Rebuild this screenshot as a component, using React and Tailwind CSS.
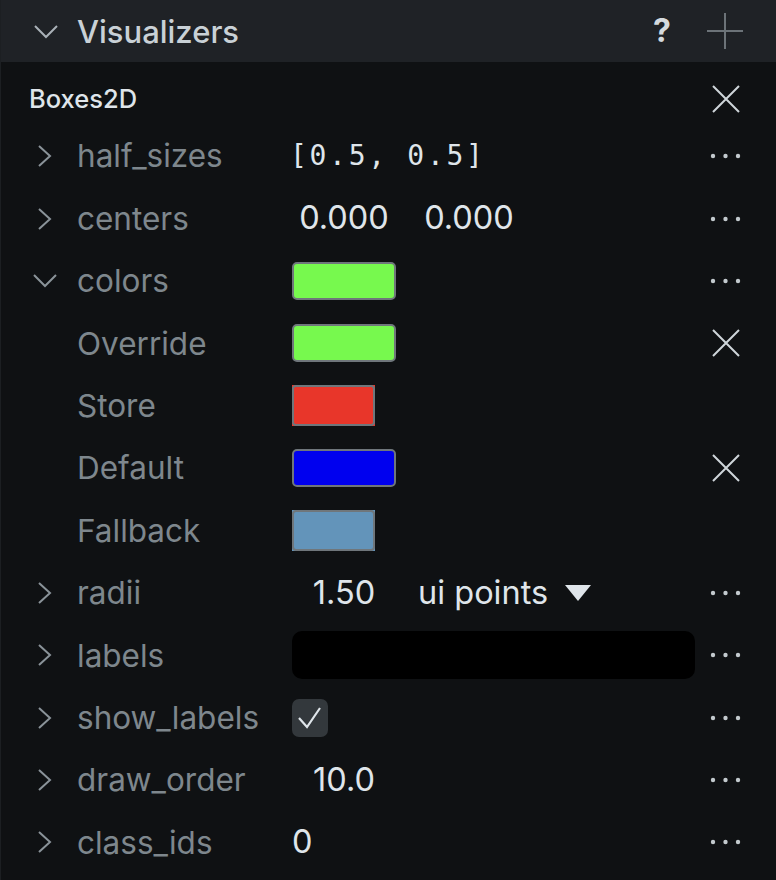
import React from 'react';

const ChevronRight = () => (
  <svg width="22" height="24" viewBox="0 0 22 24" className="text-[#8a9399]">
    <path d="M5 2 L16 12 L5 22" fill="none" stroke="currentColor" strokeWidth="2" />
  </svg>
);

const ChevronDown = ({ className = 'text-[#8a9399]' }) => (
  <svg width="24" height="16" viewBox="0 0 24 16" className={className}>
    <path d="M1 2 L12 13 L23 2" fill="none" stroke="currentColor" strokeWidth="2" />
  </svg>
);

const Cross = () => (
  <svg width="28" height="28" viewBox="0 0 28 28" className="text-[#cfd6da]">
    <path d="M1 1 L27 27 M27 1 L1 27" fill="none" stroke="currentColor" strokeWidth="2" />
  </svg>
);

const Dots = () => (
  <svg width="32" height="6" viewBox="0 0 32 6" className="text-[#c3cace]">
    <circle cx="3" cy="3" r="2.2" fill="currentColor" />
    <circle cx="15.5" cy="3" r="2.2" fill="currentColor" />
    <circle cx="28" cy="3" r="2.2" fill="currentColor" />
  </svg>
);

const Swatch = ({ color }) => (
  <div className="w-[104px] h-[38px] border-2 border-[#6f767b] rounded-[5px]" style={{ backgroundColor: color }} />
);

// square swatch: colour bleeds past the rounded gray frame
const FlatSwatch = ({ color }) => (
  <div className="w-[83px] h-[41px]" style={{ backgroundColor: color }}>
    <div className="w-full h-full border-2 border-[#6f767b] rounded-[4px]" />
  </div>
);

const Row = ({ chevron = 'right', label, children, action }) => (
  <div className="flex items-center h-[62.4px]">
    <div className="w-[76px] flex justify-center pl-[16px] pr-[4px]">
      {chevron === 'right' && <ChevronRight />}
      {chevron === 'down' && <ChevronDown />}
    </div>
    <div className="w-[215px] text-[31.5px] text-[#7e878d] leading-none">{label}</div>
    <div className="flex-1 flex items-center">{children}</div>
    <div className="w-[76px] flex justify-center pr-[24px]">
      {action === 'dots' && <Dots />}
      {action === 'x' && <Cross />}
    </div>
  </div>
);

const DragValue = ({ children }) => (
  <div className="w-[104px] text-center text-[32.5px] text-[#dfe5ea] leading-none">{children}</div>
);

export default function App() {
  return (
    <div className="w-[776px] h-[880px] bg-[#0f1113] border-l border-[#1c1f22] font-['Inter',sans-serif] overflow-hidden">
      <div className="h-[62px] bg-[#1f2226] flex items-center">
        <div className="w-[76px] flex justify-end pr-[19px] pt-[2px]">
          <ChevronDown className="text-[#a9b1b7]" />
        </div>
        <div className="flex-1 text-[31px] font-medium text-[#c9d1d6] leading-none">Visualizers</div>
        <div className="text-[32px] font-bold text-[#d4dade] leading-none mr-[36px]">?</div>
        <svg width="36" height="36" viewBox="0 0 36 36" className="mr-[33px] text-[#6c7378]">
          <path d="M18 0 V36 M0 18 H36" stroke="currentColor" strokeWidth="2" />
        </svg>
      </div>

      <div className="h-[63px] flex items-center pt-[11px]">
        <div className="flex-1 pl-[28px] text-[25.5px] font-medium text-[#dfe5ea] leading-none">Boxes2D</div>
        <div className="w-[76px] flex justify-center pr-[24px]">
          <Cross />
        </div>
      </div>

      <Row label="half_sizes" action="dots">
        <span className="-ml-[2px] font-['DejaVu_Sans_Mono',monospace] text-[28px] tracking-[2.7px] text-[#dfe5ea] leading-none">
          [0.5, 0.5]
        </span>
      </Row>
      <Row label="centers" action="dots">
        <DragValue>0.000</DragValue>
        <div className="w-[21px]" />
        <DragValue>0.000</DragValue>
      </Row>
      <Row chevron="down" label="colors" action="dots">
        <Swatch color="#77f94e" />
      </Row>
      <Row chevron="none" label="Override" action="x">
        <Swatch color="#77f94e" />
      </Row>
      <Row chevron="none" label="Store">
        <FlatSwatch color="#e8362a" />
      </Row>
      <Row chevron="none" label="Default" action="x">
        <Swatch color="#0000ef" />
      </Row>
      <Row chevron="none" label="Fallback">
        <FlatSwatch color="#6394ba" />
      </Row>
      <Row label="radii" action="dots">
        <DragValue>1.50</DragValue>
        <div className="flex items-center ml-[22px] text-[32.5px] text-[#dfe5ea] leading-none">
          ui points
          <svg width="26" height="18" viewBox="0 0 26 18" className="ml-[17px] text-[#dfe5ea]">
            <path d="M0 1 H26 L13 17 Z" fill="currentColor" />
          </svg>
        </div>
      </Row>
      <Row label="labels" action="dots">
        <div className="w-[403px] h-[48px] bg-black rounded-[10px]" />
      </Row>
      <Row label="show_labels" action="dots">
        <div className="w-[36px] h-[38px] bg-[#33383c] rounded-[7px] flex items-center justify-center">
          <svg width="24" height="22" viewBox="0 0 24 22" className="text-[#dfe5ea]">
            <path d="M1 11 L9 20 L22 1" fill="none" stroke="currentColor" strokeWidth="2.2" />
          </svg>
        </div>
      </Row>
      <Row label="draw_order" action="dots">
        <DragValue>10.0</DragValue>
      </Row>
      <Row label="class_ids" action="dots">
        <span className="text-[32.5px] text-[#dfe5ea] leading-none">0</span>
      </Row>
    </div>
  );
}
